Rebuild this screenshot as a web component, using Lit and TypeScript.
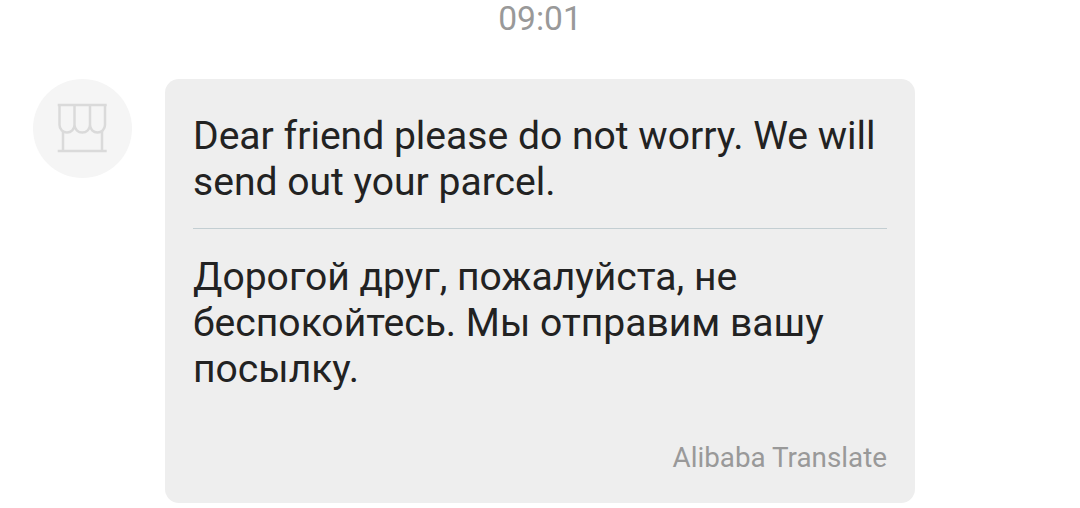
import { LitElement, html, css } from 'lit';
import { customElement, property } from 'lit/decorators.js';

// round grey avatar with a shop front in it
@customElement('store-avatar')
export class StoreAvatar extends LitElement {
  static styles = css`
    :host {
      display: block;
      flex: none;
      width: 99px;
      height: 99px;
      border-radius: 50%;
      background-color: #f5f5f5;
    }
    svg {
      display: block;
      fill: none;
      stroke: #dadada;
      stroke-width: 2.5;
    }
  `;

  render() {
    return html`
      <svg width="99" height="99" viewBox="0 0 99 99">
        <path d="M24.7 26H73.7" />
        <path d="M26.5 26V46a7.5 7.5 0 0 0 15 0V26M41.5 46a7.75 7.5 0 0 0 15.5 0V26M57 46a7.5 7.5 0 0 0 15 0V26" />
        <path d="M30 52V72M69 52V72M24.7 72H73.7" />
      </svg>
    `;
  }
}

// grey bubble: original text, a line, its translation
@customElement('message-bubble')
export class MessageBubble extends LitElement {
  @property() text = '';
  @property() translation = '';
  @property() provider = '';

  static styles = css`
    :host {
      display: block;
      box-sizing: border-box;
      width: 750px;
      height: 424px;
      padding: 34px 28px 0;
      border-radius: 14px;
      background-color: #eeeeee;
      color: #222222;
      font-size: 39.1px;
      line-height: 46px;
    }
    p {
      margin: 0;
    }
    .text {
      padding-bottom: 23px;
      border-bottom: 1px solid #c3ced2;
    }
    .translation {
      padding-top: 25px;
    }
    .provider {
      margin-top: 43px;
      color: #999999;
      font-size: 27.8px;
      text-align: right;
    }
  `;

  render() {
    return html`
      <p class="text">${this.text}</p>
      <p class="translation">${this.translation}</p>
      <p class="provider">${this.provider}</p>
    `;
  }
}

@customElement('app-root')
export class AppRoot extends LitElement {
  static styles = css`
    :host {
      display: block;
      height: 508px;
      overflow: hidden;
      background-color: #ffffff;
      font-family: Roboto, sans-serif;
    }
    .time {
      height: 79px;
      color: #999999;
      font-size: 33.6px;
      line-height: 37px;
      text-align: center;
    }
    .message {
      display: flex;
      align-items: flex-start;
      gap: 33px;
      padding-left: 33px;
    }
  `;

  render() {
    return html`
      <div class="time">09:01</div>
      <div class="message">
        <store-avatar></store-avatar>
        <message-bubble
          text="Dear friend please do not worry. We will send out your parcel."
          translation="Дорогой друг, пожалуйста, не беспокойтесь. Мы отправим вашу посылку."
          provider="Alibaba Translate"
        ></message-bubble>
      </div>
    `;
  }
}
